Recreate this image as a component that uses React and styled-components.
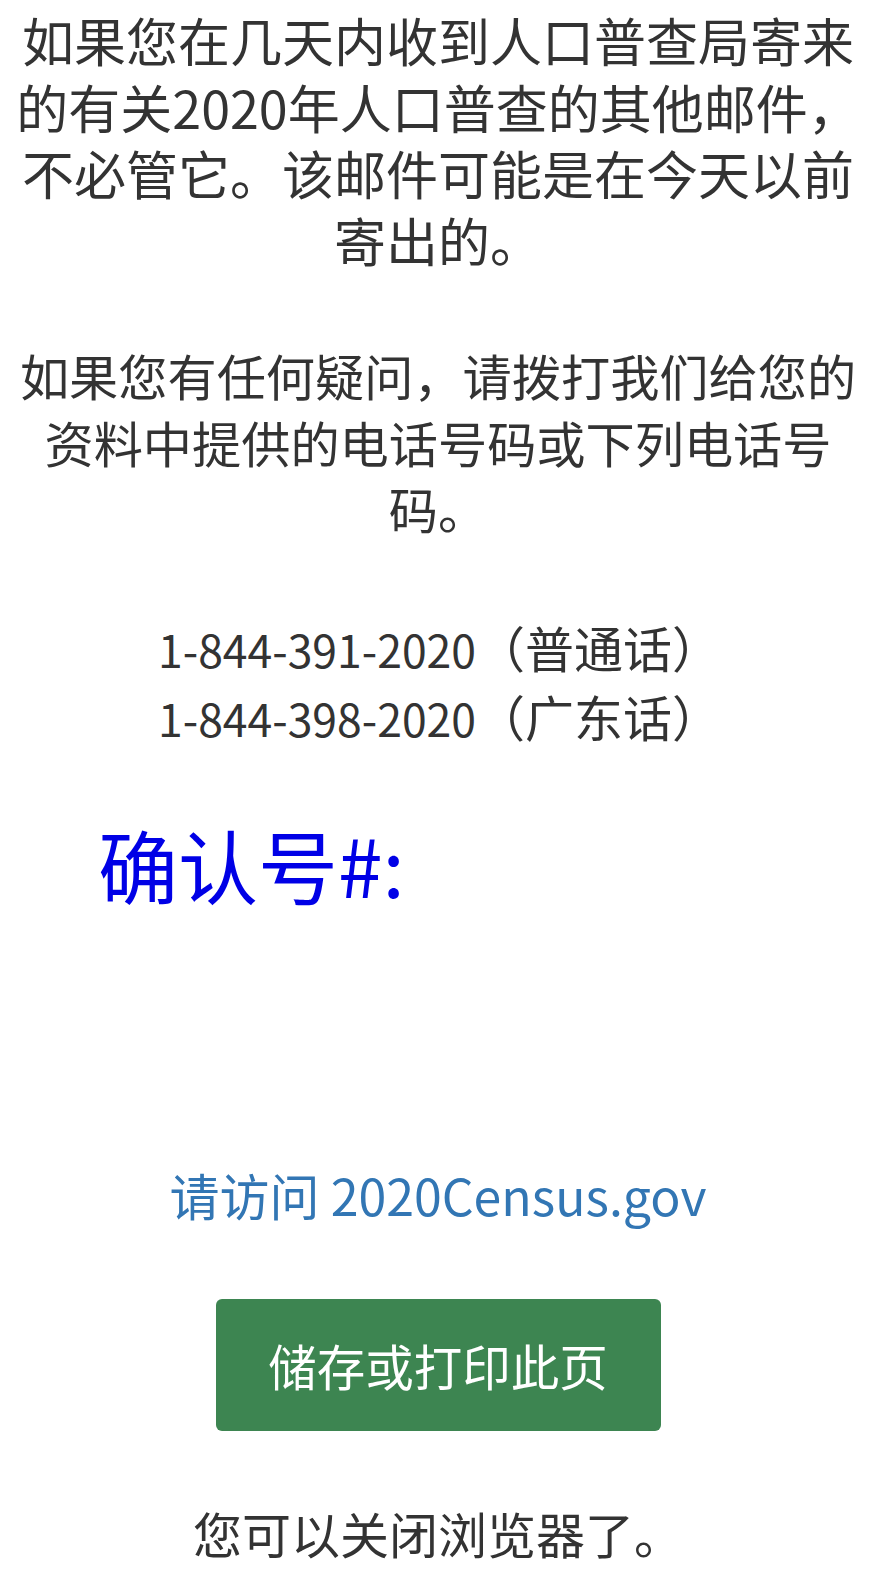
import styled, { createGlobalStyle } from 'styled-components';

const GlobalStyle = createGlobalStyle`
  html, body {
    margin: 0;
    padding: 0;
    background: #fff;
  }
  body {
    font-family: "Noto Sans CJK SC", "Noto Sans", sans-serif;
    color: #333;
  }
`;

const Page = styled.main`
  display: flex;
  flex-direction: column;
  box-sizing: border-box;
  width: 883px;
  padding: 7px 17px 40px 10px;
`;

const Notice = styled.p`
  margin: ${(props) => props.$top || 0}px 0 0;
  text-align: center;
  font-size: ${(props) => props.$size}px;
  line-height: 66.5px;
  color: #333;
`;

const PhoneList = styled.div`
  display: flex;
  flex-direction: column;
  margin: 71px 0 0 148px;
  font-size: 49px;
  line-height: 67px;
  color: #333;
`;

const PhoneNumber = styled.span`
  font-size: 44.5px;
`;

const ConfirmLabel = styled.h2`
  margin: 63px 0 0 88px;
  font-size: 80px;
  line-height: 99px;
  font-weight: 400;
  color: #0000e6;
`;

const VisitLink = styled.a`
  margin-top: 248px;
  align-self: center;
  font-size: 50px;
  line-height: 66px;
  color: #3276b4;
  text-decoration: none;
`;

const SaveButton = styled.button`
  align-self: center;
  margin-top: 72px;
  width: 445px;
  height: 132px;
  border: none;
  border-radius: 6px;
  background: #3d8551;
  color: #fff;
  font-family: inherit;
  font-size: 48.5px;
  cursor: pointer;
`;

const CloseNote = styled.p`
  margin: 69px 0 0;
  text-align: center;
  font-size: 49px;
  line-height: 66px;
  color: #333;
`;

const phones = [
  { number: '1-844-391-2020', lang: '普通话' },
  { number: '1-844-398-2020', lang: '广东话' },
];

export default function App() {
  return (
    <>
      <GlobalStyle />
      <Page>
        <Notice $size={52}>
          如果您在几天内收到人口普查局寄来的有关2020年人口普查的其他邮件，不必管它。该邮件可能是在今天以前寄出的。
        </Notice>
        <Notice $size={49.2} $top={69}>
          如果您有任何疑问，请拨打我们给您的资料中提供的电话号码或下列电话号码。
        </Notice>
        <PhoneList>
          {phones.map((p) => (
            <span key={p.number}>
              <PhoneNumber>{p.number}</PhoneNumber>（{p.lang}）
            </span>
          ))}
        </PhoneList>
        <ConfirmLabel>确认号#:</ConfirmLabel>
        <VisitLink href="#">请访问 2020Census.gov</VisitLink>
        <SaveButton type="button">储存或打印此页</SaveButton>
        <CloseNote>您可以关闭浏览器了。</CloseNote>
      </Page>
    </>
  );
}
